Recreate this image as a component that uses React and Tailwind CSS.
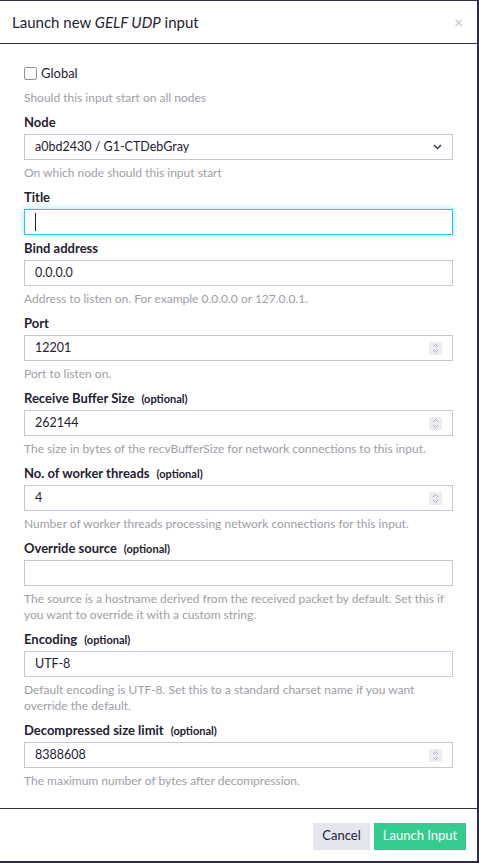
import { useState } from "react";

function Spinner() {
  return (
    <span className="flex h-[13px] w-[13px] items-center justify-center bg-[#ececf1]">
      <svg width="7" height="11" viewBox="0 0 7 11" fill="none" stroke="#a9abbb" strokeWidth="1">
        <path d="M1 4 L3.5 1.5 L6 4" />
        <path d="M1 7 L3.5 9.5 L6 7" />
      </svg>
    </span>
  );
}

function Label({ text, optional }) {
  return (
    <div className="h-[18px] leading-[18px] mb-[3px] text-[13px] font-bold text-[#1f2130]">
      {text}
      {optional && <span className="ml-[7px] text-[11px]">(optional)</span>}
    </div>
  );
}

function Help({ children, className = "mt-[5px]" }) {
  return <div className={className + " text-[12px] leading-4 text-[#9d9ea5]"}>{children}</div>;
}

function Field({ label, optional, value, number, focused, help }) {
  return (
    <div className={help ? "mb-[7px]" : "mb-[4px]"}>
      <Label text={label} optional={optional} />
      <div
        className={
          "flex h-[26px] items-center justify-between border px-[10px] text-[12.5px] text-[#1f2130] " +
          (focused
            ? "border-[#1fc6f5] shadow-[0_0_6px_rgba(31,198,245,0.45)]"
            : "border-[#c5c7d8]")
        }
      >
        {focused ? <span className="h-[18px] w-px bg-[#1f2130]" /> : <span>{value}</span>}
        {number && <Spinner />}
      </div>
      {help && <Help>{help}</Help>}
    </div>
  );
}

export default function App() {
  const [global, setGlobal] = useState(false);

  return (
    <div className="flex h-[863px] w-[479px] flex-col border-t border-r-2 border-b-2 border-[#2e2b52] bg-white font-['Lato',sans-serif] text-[#1f2130]">
      <div className="flex h-[43px] items-center justify-between border-b border-[#2e2b52] pl-3 pr-[14px]">
        <h3 className="text-[15px]">
          Launch new <em>GELF UDP</em> input
        </h3>
        <span className="text-[15px] font-bold text-[#cfcfd6]">×</span>
      </div>

      <div className="flex-1 px-6 pt-[20px]">
        <label className="flex items-center gap-[4px] text-[13px] leading-[18px]">
          <input
            type="checkbox"
            checked={global}
            onChange={() => setGlobal(!global)}
            className="h-[13px] w-[13px] appearance-none rounded-[2px] border border-[#8f909c] bg-white"
          />
          Global
        </label>
        <Help className="mt-[8px]">Should this input start on all nodes</Help>

        <div className="mt-[7px] mb-[7px]">
          <Label text="Node" />
          <div className="flex h-[26px] items-center justify-between border border-[#c5c7d8] px-[10px] text-[12.5px]">
            <span>a0bd2430 / G1-CTDebGray</span>
            <svg width="9" height="6" viewBox="0 0 9 6" fill="none" stroke="#3a3c55" strokeWidth="1.5">
              <path d="M1 1 L4.5 4.5 L8 1" />
            </svg>
          </div>
          <Help>On which node should this input start</Help>
        </div>

        <Field label="Title" focused />
        <Field label="Bind address" value="0.0.0.0" help="Address to listen on. For example 0.0.0.0 or 127.0.0.1." />
        <Field label="Port" value="12201" number help="Port to listen on." />
        <Field
          label="Receive Buffer Size"
          optional
          value="262144"
          number
          help="The size in bytes of the recvBufferSize for network connections to this input."
        />
        <Field
          label="No. of worker threads"
          optional
          value="4"
          number
          help="Number of worker threads processing network connections for this input."
        />
        <Field
          label="Override source"
          optional
          value=""
          help="The source is a hostname derived from the received packet by default. Set this if you want to override it with a custom string."
        />
        <Field
          label="Encoding"
          optional
          value="UTF-8"
          help={
            <>
              Default encoding is UTF-8. Set this to a standard charset name if you want
              <br />
              override the default.
            </>
          }
        />
        <Field
          label="Decompressed size limit"
          optional
          value="8388608"
          number
          help="The maximum number of bytes after decompression."
        />
      </div>

      <div className="flex h-[53px] items-center justify-end gap-1 border-t border-[#2e2b52] pr-[11px] pt-[2px]">
        <button className="h-[27px] w-[57px] bg-[#e4e6ef] text-[13px] text-[#1f2130]">Cancel</button>
        <button className="h-[27px] w-[92px] bg-[#33cc8e] text-[13px] text-white">Launch Input</button>
      </div>
    </div>
  );
}
